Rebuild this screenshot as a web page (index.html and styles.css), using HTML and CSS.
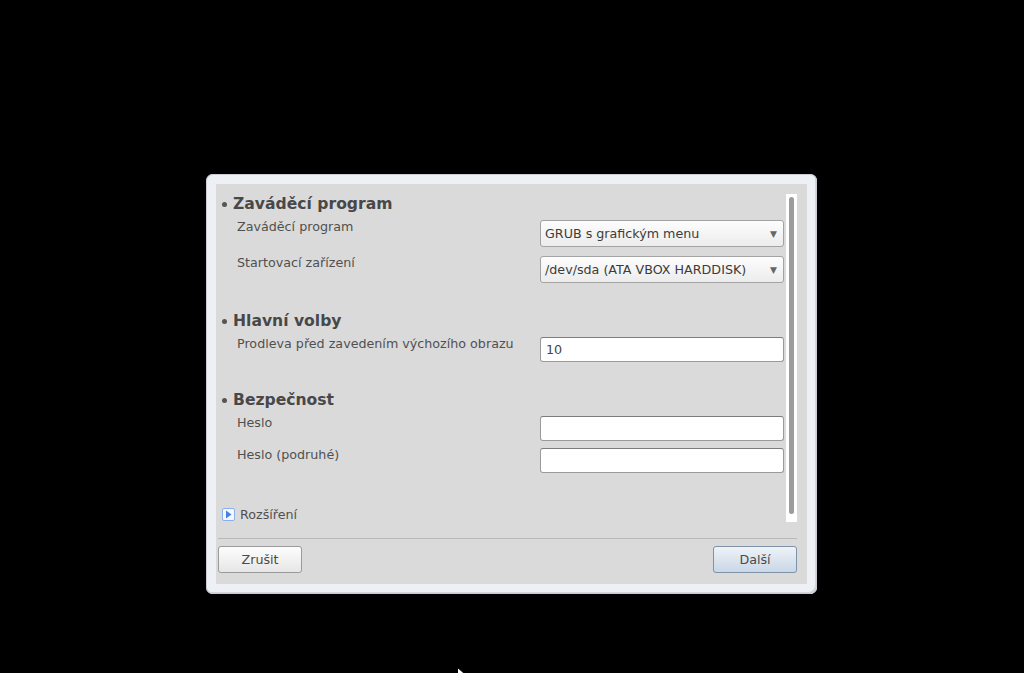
FILE: index.html
```html
<!DOCTYPE html>
<html lang="cs">
<head>
    <meta charset="UTF-8">
    <meta name="viewport" content="width=device-width, initial-scale=1.0">
    <title>Zaváděcí program</title>
    <link rel="stylesheet" href="styles.css">
</head>
<body>
    <div class="frame">
        <div class="dialog">
            <div class="scroll-area">
                <div class="content">
                    <div class="section">
                        <h2 class="section-title"><span class="bullet"></span>Zaváděcí program</h2>
                        <div class="row">
                            <span class="label">Zaváděcí program</span>
                            <div class="combo">
                                <span>GRUB s grafickým menu</span>
                                <span class="arrow">&#9660;</span>
                            </div>
                        </div>
                        <div class="row">
                            <span class="label">Startovací zařízení</span>
                            <div class="combo">
                                <span>/dev/sda (ATA VBOX HARDDISK)</span>
                                <span class="arrow">&#9660;</span>
                            </div>
                        </div>
                    </div>

                    <div class="section">
                        <h2 class="section-title"><span class="bullet"></span>Hlavní volby</h2>
                        <div class="row row-entry">
                            <span class="label">Prodleva před zavedením výchozího obrazu</span>
                            <div class="entry">10</div>
                        </div>
                    </div>

                    <div class="section">
                        <h2 class="section-title"><span class="bullet"></span>Bezpečnost</h2>
                        <div class="row row-entry">
                            <span class="label">Heslo</span>
                            <div class="entry"></div>
                        </div>
                        <div class="row row-entry">
                            <span class="label">Heslo (podruhé)</span>
                            <div class="entry"></div>
                        </div>
                    </div>

                    <div class="expander">
                        <span class="expander-icon">
                            <svg width="9" height="9" viewBox="0 0 9 9"><path d="M2 0.5 L7.5 4.5 L2 8.5 Z" fill="#4a7fe0"/></svg>
                        </span>
                        <span>Rozšíření</span>
                    </div>
                </div>
                <div class="scrollbar">
                    <div class="thumb"></div>
                </div>
            </div>

            <div class="separator"></div>

            <div class="buttons">
                <button class="btn">Zrušit</button>
                <button class="btn btn-default">Další</button>
            </div>
        </div>
    </div>

    <svg class="pointer" width="10" height="12" viewBox="0 0 10 12">
        <path d="M0.5 0.5 L0.5 10 L3 7.5 L5 11.5 L6.5 10.8 L4.6 7 L8 7 Z" fill="#fff" stroke="#000" stroke-width="1"/>
    </svg>
</body>
</html>
```

FILE: styles.css
```css
* {
    margin: 0;
    padding: 0;
    box-sizing: border-box;
}

body {
    background: #000;
    min-height: 100vh;
    padding: 174px 0 0 206px;
    font-family: 'DejaVu Sans', Verdana, sans-serif;
    font-size: 12.7px;
    color: #505050;
    position: relative;
}

.frame {
    width: 611px;
    height: 420px;
    padding: 10px;
    background: #edf0f4;
    border-radius: 7px;
    box-shadow: inset 0 0 0 1px #c9cdd2, inset -2px -2px 0 #d2d6db;
}

.dialog {
    height: 100%;
    background: #dadada;
    padding: 10px 10px 0 2px;
    display: flex;
    flex-direction: column;
}

.scroll-area {
    display: flex;
    height: 328px;
}

.content {
    flex: 1;
    padding: 0 2px 0 4px;
}

.scrollbar {
    width: 12px;
    background: #fff;
    padding: 3px 3px 8px 3px;
}

.thumb {
    height: 100%;
    background: #9c9c9c;
    border-radius: 3px;
}

.section {
    margin-bottom: 28px;
}

.section-title {
    display: flex;
    align-items: center;
    height: 20px;
    font-size: 15.6px;
    font-weight: bold;
    color: #484848;
    margin-bottom: 6px;
}

.bullet {
    width: 5px;
    height: 5px;
    border-radius: 50%;
    background: #555;
    margin: 0 6px 0 0;
}

.row {
    display: flex;
    align-items: flex-start;
    margin-bottom: 9px;
}

.row-entry {
    margin-bottom: 7px;
}

.section .row:last-child {
    margin-bottom: 0;
}

.label {
    width: 318px;
    padding: 0 0 0 15px;
    line-height: 14px;
    flex-shrink: 0;
}

.combo {
    width: 244px;
    height: 27px;
    border: 1px solid #a3a3a3;
    border-radius: 3px;
    background: linear-gradient(#fdfdfd, #ececec);
    display: flex;
    align-items: center;
    justify-content: space-between;
    padding: 0 6px 0 4px;
    color: #3c3c3c;
}

.arrow {
    font-size: 9px;
    color: #666;
}

.entry {
    width: 244px;
    height: 25px;
    background: #fff;
    border: 1px solid #9a9a9a;
    border-top-color: #7c7c7c;
    border-radius: 3px;
    padding: 4px 5px;
    color: #444;
    line-height: 16px;
}

.expander {
    display: flex;
    align-items: center;
    gap: 5px;
    margin-top: 34px;
    color: #505050;
}

.expander-icon {
    width: 13px;
    height: 13px;
    border: 1px solid #8bb0f0;
    background: #f4f7fc;
    border-radius: 2px;
    display: flex;
    align-items: center;
    justify-content: center;
}

.separator {
    height: 1px;
    background: #b9b9b9;
    margin: 16px 0 7px 0;
}

.buttons {
    display: flex;
    justify-content: space-between;
}

.btn {
    width: 84px;
    height: 27px;
    border: 1px solid #9a9a9a;
    border-radius: 3px;
    background: linear-gradient(#fdfdfd, #e6e6e6);
    font-family: 'DejaVu Sans', Verdana, sans-serif;
    font-size: 12.7px;
    color: #4a4a4a;
}

.btn-default {
    border-color: #7e92a8;
    background: linear-gradient(#eef3f8, #c9d7e6);
}

.pointer {
    position: absolute;
    left: 457px;
    top: 667px;
}
```
